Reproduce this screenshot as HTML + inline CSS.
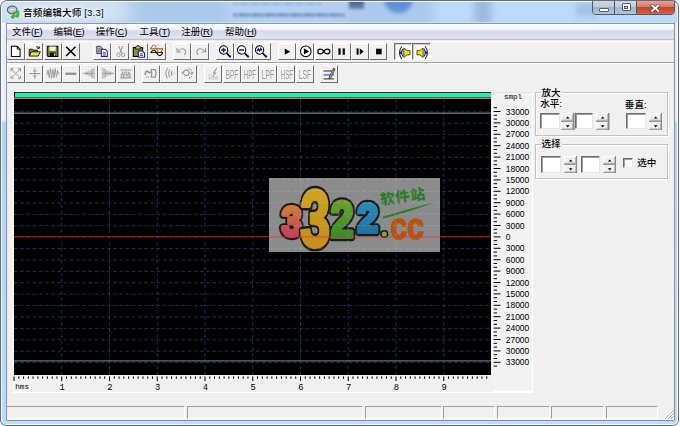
<!DOCTYPE html>
<html lang="zh-CN"><head><meta charset="utf-8"><title>音频编辑大师 [3.3]</title>
<style>
html,body{margin:0;padding:0;}
body{width:680px;height:426px;overflow:hidden;background:#fff;position:relative;
 font-family:"Liberation Sans","Noto Sans CJK SC",sans-serif;}
div,span,svg{position:absolute;box-sizing:border-box;}
#win{left:0;top:0;width:679px;height:426px;border-radius:7px 7px 6px 6px;background:linear-gradient(#b0cef0 0,#b0cef0 22px,#e6effa 23px,#e6effa 120px,#b2d3f8 123px,#bcdcfb 100%);overflow:hidden;}
#winbd{left:0;top:0;width:679px;height:426px;border-radius:7px 7px 6px 6px;border:1px solid #626a74;}
#winhi{left:1px;top:1px;width:677px;height:424px;border-radius:6px 6px 5px 5px;border:1px solid rgba(255,255,255,.85);}
#client{left:7px;top:23px;width:667px;height:397px;background:#f0f0f0;overflow:hidden;}
#cborder{left:6px;top:22px;width:669px;height:399px;border:1px solid #8391a5;border-top-color:#c6ddf6;border-radius:0 0 2px 2px;}
#title{font-weight:500;left:23px;top:5.8px;font-size:9.6px;letter-spacing:.15px;line-height:14px;color:#000;white-space:nowrap;
 text-shadow:0 0 3px #fff,0 0 5px #fff,0 0 7px #fff;}
#menubar{left:0;top:0;width:667px;height:19px;}
.mi{top:1.5px;font-size:9.5px;line-height:13px;color:#000;white-space:nowrap;}
.tb{width:18.2px;height:17.4px;background:#f0f0f0;border:1px solid;border-color:#fff #6d6d6d #6d6d6d #fff;}
.tb.dis svg{filter:drop-shadow(.8px .8px 0 #fff);}
.tb.dn{border-color:#6d6d6d #fff #fff #6d6d6d;background:#f7f7f7;box-shadow:inset 1px 1px 0 rgba(109,109,109,.3);}
.tb.dn svg{left:2.2px;top:1.9px;}
.tb svg{left:1.4px;top:1.2px;width:13.6px;height:12.75px;overflow:visible;}
.hl{left:0;width:667px;height:2px;border-top:1px solid #a0a0a0;border-bottom:1px solid #fff;}
.grp{border:1px solid #c2c2c2;border-radius:0;box-shadow:1px 1px 0 #fff, inset 1px 1px 0 #fff;}
.glab{font-weight:500;font-size:9.6px;line-height:11px;background:#f0f0f0;white-space:nowrap;color:#000;padding:0 1px;}
.lab{font-weight:500;font-size:9.6px;line-height:11px;white-space:nowrap;color:#000;}
.edit{background:#fff;border:1px solid;border-color:#6c6c6c #e6e6e6 #e6e6e6 #6c6c6c;box-shadow:inset 1px 1px 0 #9c9c9c;}
.spin{width:13.4px;}
.spin i{position:absolute;left:0;width:13.4px;height:8.6px;box-sizing:border-box;background:#f0f0f0;border:1px solid;border-color:#fff #686868 #686868 #fff;box-shadow:inset -1px -1px 0 rgba(104,104,104,.35);}
.spin i b{position:absolute;left:4.1px;top:2px;width:0;height:0;border:1.7px solid transparent;}
.sp{border:1px solid;border-color:#a0a0a0 #fff #fff #a0a0a0;height:13.4px;top:383px;}
</style></head>
<body>
<div id="win">
<div style="left:0;top:0;width:679px;height:22px;background:linear-gradient(to right,#b0ceec 0,#aacaeb 200px,#a9c8ea 218px,#b4d1f1 230px,#b2cff0 343px,#abcaec 352px,#abcaec 425px,#bcdaf9 442px,#bcdaf9 100%)"></div>
<div style="left:-10px;top:-6px;width:140px;height:34px;background:rgba(255,255,255,.45);filter:blur(9px);border-radius:12px"></div>
<div style="left:233px;top:13.4px;width:112px;height:3.2px;background:repeating-linear-gradient(to right,rgba(60,100,160,.5) 0,rgba(60,100,160,.3) 5px,rgba(60,100,160,.55) 9px,rgba(60,100,160,.35) 13px);filter:blur(1.1px)"></div>
<div style="left:233px;top:2.2px;width:88px;height:2.4px;background:repeating-linear-gradient(to right,rgba(60,100,160,.25) 0,rgba(60,100,160,.12) 6px,rgba(60,100,160,.28) 11px);filter:blur(1.1px)"></div>
<div style="left:348.5px;top:-2px;width:15.5px;height:11px;background:linear-gradient(rgba(35,50,90,.8),rgba(60,80,130,.55));filter:blur(1.7px)"></div>
<div style="left:384px;top:-16px;width:29px;height:29px;background:rgba(75,130,210,.8);filter:blur(2px);border-radius:50%"></div>
<div style="left:474px;top:-3px;width:17px;height:28px;background:rgba(90,120,170,.33);filter:blur(3.5px)"></div>
<div style="left:576px;top:4px;width:22px;height:12px;background:rgba(110,140,185,.35);filter:blur(3.5px)"></div>
<div id="winhi"></div>
<svg style="left:7px;top:5px;width:14px;height:14px" viewBox="0 0 14 14">
<ellipse cx="5.2" cy="4.9" rx="4.8" ry="3.7" fill="#cfd2d6" stroke="#5e6268" stroke-width="1.2"/>
<ellipse cx="5" cy="4.5" rx="2.4" ry="1.5" fill="#f8f8f8" stroke="#8a8e94" stroke-width=".6"/>
<path d="M6.2 7.2 L11.8 6 L11.8 10.8 A1.7 1.4 0 1 1 10.5 9.5 L10.5 7.9 L7.5 8.6 L7.5 11.9 A1.7 1.4 0 1 1 6.2 10.6 Z" fill="#3ec23a" stroke="#22961f" stroke-width=".5"/>
</svg>
<div id="title">音频编辑大师 [3.3]</div>
<div style="left:592px;top:-1px;width:83px;height:16px;border:1px solid #4c5966;border-radius:0 0 4px 4px;overflow:hidden;background:#c5d6ea">
<div style="left:0;top:0;width:22px;height:15px;background:linear-gradient(#d3dce8 0%,#bcc9da 45%,#a2b3c9 50%,#b7c6d9 100%);border-right:1px solid #4c5966"></div>
<div style="left:22px;top:0;width:22px;height:15px;background:linear-gradient(#d3dce8 0%,#bcc9da 45%,#a2b3c9 50%,#b7c6d9 100%);border-right:1px solid #4c5966"></div>
<div style="left:44px;top:0;width:38px;height:15px;background:linear-gradient(#e9a99b 0%,#d9796a 45%,#c6432c 50%,#cf5a40 85%,#d98268 100%)"></div>
<div style="left:6px;top:8px;width:10px;height:3.6px;background:#fff;border:1px solid #55606e;border-radius:1px"></div>
<div style="left:28.5px;top:3.4px;width:9.6px;height:8px;border:1px solid #55606e;border-radius:1px;background:#fff"></div>
<div style="left:31.2px;top:6px;width:4.2px;height:2.8px;border:1px solid #55606e;background:#c3d3e6"></div>
<svg style="left:57px;top:3.7px;width:10.4px;height:8.4px" viewBox="0 0 11 9"><path d="M2.2 1.6 L8.8 7.4 M8.8 1.6 L2.2 7.4" stroke="#4a4656" stroke-width="3.4" stroke-linecap="square"/><path d="M2.2 1.6 L8.8 7.4 M8.8 1.6 L2.2 7.4" stroke="#fff" stroke-width="1.9" stroke-linecap="square"/></svg>
</div>
<div id="cborder"></div>
<div id="client">
<div id="menubar">
<svg style="left:0;top:0;width:667px;height:19px" viewBox="0 0 667 19" preserveAspectRatio="none">
<defs><linearGradient id="mg" x1="0" y1="0" x2="0" y2="1"><stop offset="0" stop-color="#ffffff"/><stop offset=".08" stop-color="#ffffff"/><stop offset=".3" stop-color="#f6f7fc"/><stop offset=".455" stop-color="#eceef9"/><stop offset=".48" stop-color="#d4d9ec"/><stop offset=".9" stop-color="#dde1f1"/><stop offset=".95" stop-color="#e7e9fb"/><stop offset="1" stop-color="#d0d2e0"/></linearGradient></defs>
<rect x="0" y="0" width="667" height="15.8" fill="url(#mg)"/>
<rect x="0" y="0" width="667" height="0.8" fill="#74808f"/>
<rect x="0" y="15.8" width="667" height="0.5" fill="#c6c8d2"/>
<rect x="0" y="16.2" width="667" height="1.3" fill="#bcbcbc"/>
<rect x="0" y="17.5" width="667" height="1.2" fill="#ffffff"/>
</svg>
<span class="mi" style="left:5px">文件<span style="position:static;letter-spacing:-.3px">(<u>F</u>)</span></span>
<span class="mi" style="left:46.5px">编辑<span style="position:static;letter-spacing:-.3px">(<u>E</u>)</span></span>
<span class="mi" style="left:88.7px">操作<span style="position:static;letter-spacing:-.3px">(<u>C</u>)</span></span>
<span class="mi" style="left:132.5px">工具<span style="position:static;letter-spacing:-.3px">(<u>T</u>)</span></span>
<span class="mi" style="left:174.2px">注册<span style="position:static;letter-spacing:-.3px">(<u>R</u>)</span></span>
<span class="mi" style="left:218px">帮助<span style="position:static;letter-spacing:-.3px">(<u>H</u>)</span></span>
</div>
<div class="tb" style="left:0.00px;top:19.80px"><svg viewBox="0 0 16 15"><path d="M2.8 1.5 H9.6 L13 4.9 V13.6 H2.8 Z" fill="#fff" stroke="#000" stroke-width="1.2"/><path d="M9.6 1.5 V4.9 H13" fill="none" stroke="#000" stroke-width="1"/></svg></div>
<div class="tb" style="left:18.25px;top:19.80px"><svg viewBox="0 0 16 15"><path d="M1.5 13 V5 H5 L6 6 H11 V8" fill="#8a8a1e" stroke="#000" stroke-width="1"/><path d="M1.5 13 L4 8 H14.5 L12 13 Z" fill="#e6e65a" stroke="#000" stroke-width="1"/><path d="M9.5 2.5 Q12 1 13 3.5 M13.3 1.6 V4 H11" fill="none" stroke="#000" stroke-width="1"/></svg></div>
<div class="tb" style="left:36.50px;top:19.80px"><svg viewBox="0 0 16 15"><path d="M1.5 1.5 H14 V13.5 H2.5 L1.5 12.5 Z" fill="#7f7f16" stroke="#000" stroke-width="1.2"/><rect x="4" y="1.8" width="7.5" height="5" fill="#f3f3f3"/><rect x="4.5" y="9" width="7" height="4.5" fill="#111"/><rect x="9.3" y="10" width="1.6" height="2.6" fill="#e8e8e8"/></svg></div>
<div class="tb" style="left:54.75px;top:19.80px"><svg viewBox="0 0 16 15"><path d="M2.5 2 L13.5 13 M13.5 2 L2.5 13" stroke="#000" stroke-width="1.9" fill="none"/></svg></div>
<div class="tb" style="left:86.00px;top:19.80px"><svg viewBox="0 0 16 15"><path d="M2 1.5 H6.5 L8.5 3.5 V10 H2 Z" fill="#b5b5b5" stroke="#3a3a3a" stroke-width="1"/><path d="M7.5 5 H12 L14.5 7.5 V13.5 H7.5 Z" fill="#fff" stroke="#1a1aa8" stroke-width="1.2"/><path d="M9.2 8.5 H12.5 M9.2 10.3 H12.8 M9.2 12 H12.8" stroke="#1a1aa8" stroke-width=".9"/><path d="M3.5 4 H6 M3.5 6 H6.5 M3.5 8 H6" stroke="#555" stroke-width=".8"/></svg></div>
<div class="tb dis" style="left:104.25px;top:19.80px"><svg viewBox="0 0 16 15"><path d="M5.5 1 L9.2 9.5 M10.5 1 L6.8 9.5" stroke="#969696" stroke-width="1.2" fill="none"/><circle cx="5.3" cy="11.6" r="2" fill="none" stroke="#969696" stroke-width="1.1"/><circle cx="10.7" cy="11.6" r="2" fill="none" stroke="#969696" stroke-width="1.1"/></svg></div>
<div class="tb" style="left:122.50px;top:19.80px"><svg viewBox="0 0 16 15"><rect x="1.5" y="3" width="11" height="10.5" fill="#8f8f2a" stroke="#000" stroke-width="1.2"/><path d="M4.2 4.6 V2.2 H6 V0.8 H8.2 V2.2 H10 V4.6 Z" fill="#d8d86a" stroke="#000" stroke-width=".9"/><path d="M7.5 7 H12.2 L14.8 9.5 V14.5 H7.5 Z" fill="#fff" stroke="#1a1aa8" stroke-width="1.3"/><path d="M9.3 10.4 H12.8 M9.3 12.4 H12.8" stroke="#1a1aa8" stroke-width="1"/></svg></div>
<div class="tb" style="left:140.75px;top:19.80px"><svg viewBox="0 0 16 15"><path d="M0.5 4.4 H15.5" stroke="#9a9a1a" stroke-width="1.5"/><path d="M1 4.4 Q4.5 -4.4 8 4.4 T15 4.4" fill="none" stroke="#e41a1a" stroke-width="1.3" stroke-dasharray="1.7 1"/><path d="M0.5 8.8 H15.5" stroke="#222" stroke-width="1.1"/><path d="M1 9 Q4.5 3 8 9.4 T15 9" fill="none" stroke="#000" stroke-width="1.3"/></svg></div>
<div class="tb dis" style="left:166.00px;top:19.80px"><svg viewBox="0 0 16 15"><path d="M3 7.5 Q7.5 2.5 11.5 5.5 Q14 8 11 11.5" fill="none" stroke="#969696" stroke-width="1.3"/><path d="M2.4 3.6 V8.2 H7" fill="none" stroke="#969696" stroke-width="1.3"/></svg></div>
<div class="tb dis" style="left:184.25px;top:19.80px"><svg viewBox="0 0 16 15"><path d="M13 7.5 Q8.5 2.5 4.5 5.5 Q2 8 5 11.5" fill="none" stroke="#969696" stroke-width="1.3"/><path d="M13.6 3.6 V8.2 H9" fill="none" stroke="#969696" stroke-width="1.3"/></svg></div>
<div class="tb" style="left:209.20px;top:19.80px"><svg viewBox="0 0 16 15"><circle cx="5.4" cy="5.9" r="4.9" fill="#fff" stroke="#000" stroke-width="1.2"/><path d="M8.8 9.4 L13.6 14.2" stroke="#000" stroke-width="2"/><path d="M12.2 12.6 L13.8 14.2" stroke="#1a1aa8" stroke-width="2.2"/><path d="M2.6 5.9 H8.2 M5.4 3.1 V8.7" stroke="#1414b4" stroke-width="1.8"/></svg></div>
<div class="tb" style="left:227.45px;top:19.80px"><svg viewBox="0 0 16 15"><circle cx="5.4" cy="5.9" r="4.9" fill="#fff" stroke="#000" stroke-width="1.2"/><path d="M8.8 9.4 L13.6 14.2" stroke="#000" stroke-width="2"/><path d="M12.2 12.6 L13.8 14.2" stroke="#1a1aa8" stroke-width="2.2"/><path d="M2.6 5.9 H8.2" stroke="#1414b4" stroke-width="1.8"/></svg></div>
<div class="tb" style="left:245.70px;top:19.80px"><svg viewBox="0 0 16 15"><circle cx="5.4" cy="5.9" r="4.9" fill="#fff" stroke="#000" stroke-width="1.2"/><path d="M8.8 9.4 L13.6 14.2" stroke="#000" stroke-width="2"/><path d="M12.2 12.6 L13.8 14.2" stroke="#1a1aa8" stroke-width="2.2"/><path d="M2.4 7.2 L4 4.4 L5.4 7 L6.8 4.2 L8.4 6.4" fill="none" stroke="#1414b4" stroke-width="1.5"/><path d="M3 5.8 H8" stroke="#1414b4" stroke-width="1.2"/></svg></div>
<div class="tb" style="left:271.00px;top:19.80px"><svg viewBox="0 0 16 15"><path d="M5.6 4.2 L12 7.8 L5.6 11.4 Z" fill="#000"/></svg></div>
<div class="tb" style="left:289.25px;top:19.80px"><svg viewBox="0 0 16 15"><circle cx="8" cy="7.5" r="6.2" fill="#fff" stroke="#000" stroke-width="1.2"/><path d="M5.8 3.8 L11.8 7.5 L5.8 11.2 Z" fill="#000"/></svg></div>
<div class="tb" style="left:307.50px;top:19.80px"><svg viewBox="0 0 16 15"><path d="M8 7.7 C6 3.9 1 4.2 1 7.7 C1 11.2 6 11.5 8 7.7 C10 3.9 15 4.2 15 7.7 C15 11.2 10 11.5 8 7.7 Z" fill="none" stroke="#000" stroke-width="1.45"/></svg></div>
<div class="tb" style="left:325.75px;top:19.80px"><svg viewBox="0 0 16 15"><rect x="4" y="4" width="2.6" height="7.5" fill="#000"/><rect x="9" y="4" width="2.6" height="7.5" fill="#000"/></svg></div>
<div class="tb" style="left:344.00px;top:19.80px"><svg viewBox="0 0 16 15"><rect x="4.2" y="4" width="2.4" height="7.5" fill="#000"/><path d="M8 4 L12.6 7.75 L8 11.5 Z" fill="#000"/></svg></div>
<div class="tb" style="left:362.25px;top:19.80px"><svg viewBox="0 0 16 15"><rect x="4.8" y="4.4" width="6.6" height="6.6" fill="#000"/></svg></div>
<div class="tb dn" style="left:387.20px;top:19.80px"><svg viewBox="0 0 16 15"><path d="M15.2 5.4 H11.8 L8 2.4 V13.4 L11.8 10.4 H15.2 Z" fill="#e8e81c" stroke="#3a3a00" stroke-width="1"/><path d="M5.6 0.6 Q0.4 7.9 5.6 15.2" fill="none" stroke="#26264a" stroke-width="1.3"/><path d="M7 3.4 Q4 7.9 7 12.4" fill="none" stroke="#26264a" stroke-width="1.2"/><rect x="3.2" y="6.6" width="2.8" height="2.6" fill="#1a1aa8"/></svg></div>
<div class="tb dn" style="left:405.40px;top:19.80px"><svg viewBox="0 0 16 15"><path d="M1.2 5.4 H4.6 L8.4 2.4 V13.4 L4.6 10.4 H1.2 Z" fill="#e8e81c" stroke="#3a3a00" stroke-width="1"/><path d="M10.8 0.6 Q16 7.9 10.8 15.2" fill="none" stroke="#26264a" stroke-width="1.3"/><path d="M9.4 3.4 Q12.4 7.9 9.4 12.4" fill="none" stroke="#26264a" stroke-width="1.2"/><rect x="10.4" y="6.6" width="2.8" height="2.6" fill="#1a1aa8"/></svg></div>
<div class="hl" style="top:39.2px"></div>
<div class="tb dis" style="left:0.00px;top:42.20px"><svg viewBox="0 0 16 15"><path d="M3.4 3.2 L12.6 12.2 M12.6 3.2 L3.4 12.2" stroke="#969696" stroke-width="1.1"/><path d="M2.4 5.2 V2.2 H5.4 M10.6 2.2 H13.6 V5.2 M13.6 10.2 V13.2 H10.6 M5.4 13.2 H2.4 V10.2" fill="none" stroke="#969696" stroke-width="1.2"/></svg></div>
<div class="tb dis" style="left:18.25px;top:42.20px"><svg viewBox="0 0 16 15"><path d="M1.5 7.7 H14.5" stroke="#969696" stroke-width="1.3"/><path d="M8 1 V14.4 M5.8 4.8 H10.2 M5.8 10.6 H10.2" stroke="#969696" stroke-width="1.1"/></svg></div>
<div class="tb dis" style="left:36.50px;top:42.20px"><svg viewBox="0 0 16 15"><path d="M1 9.5 L2.4 3.5 L3.8 12.5 L5.2 1.8 L6.6 13.4 L8 3 L9.4 12.6 L10.8 1.8 L12.2 12 L13.6 4 L15 9" fill="none" stroke="#969696" stroke-width="1.1"/></svg></div>
<div class="tb dis" style="left:54.75px;top:42.20px"><svg viewBox="0 0 16 15"><path d="M1.5 7.3 H14.5 M1.5 8.7 H14.5" stroke="#969696" stroke-width="1.4"/></svg></div>
<div class="tb dis" style="left:73.00px;top:42.20px"><svg viewBox="0 0 16 15"><path d="M2.2 6.9 V8.1 M3.7 6.3 V8.7 M5.2 5.1 V9.9 M6.7 5.7 V9.3 M8.2 3.9 V11.1 M9.7 4.7 V10.3 M11.2 2.5 V12.5 M12.7 1.7 V13.3 M14.2 0.9 V14.1 " stroke="#969696" stroke-width=".9"/><path d="M1 7.5 H15" stroke="#969696" stroke-width=".9"/></svg></div>
<div class="tb dis" style="left:91.25px;top:42.20px"><svg viewBox="0 0 16 15"><path d="M2.2 0.9 V14.1 M3.7 1.7 V13.3 M5.2 2.5 V12.5 M6.7 4.7 V10.3 M8.2 3.9 V11.1 M9.7 5.7 V9.3 M11.2 5.1 V9.9 M12.7 6.3 V8.7 M14.2 6.9 V8.1 " stroke="#969696" stroke-width=".9"/><path d="M1 7.5 H15" stroke="#969696" stroke-width=".9"/></svg></div>
<div class="tb dis" style="left:109.50px;top:42.20px"><svg viewBox="0 0 16 15"><path d="M1.5 3.6 H14.5 M1.5 12.8 H14.5" stroke="#969696" stroke-width="1.2"/><path d="M2.5 11 L4.2 5.5 L5.9 11 Z M10.1 11 L11.8 5.5 L13.5 11 Z M6.8 11 V5.8 H9.2 V11" fill="none" stroke="#969696" stroke-width="1"/><path d="M1.5 9 H14.5" stroke="#969696" stroke-width=".8"/></svg></div>
<div class="tb dis" style="left:134.90px;top:42.20px"><svg viewBox="0 0 16 15"><path d="M1.5 9.5 Q1.5 3.5 4.5 5.5 T8.5 5.5" fill="none" stroke="#969696" stroke-width="2"/><path d="M8.5 3 H13.4 Q14.8 7.5 13.4 12 H8.5 Q10 7.5 8.5 3Z" fill="none" stroke="#969696" stroke-width="1.5"/><path d="M2 12 H6.5" stroke="#969696" stroke-width="1.4" stroke-dasharray="1.4 .8"/></svg></div>
<div class="tb dis" style="left:153.15px;top:42.20px"><svg viewBox="0 0 16 15"><path d="M5.4 1.4 Q1.2 7.5 5.4 13.6 M8.2 3 Q5 7.5 8.2 12 M10.8 4.8 Q8.8 7.5 10.8 10.2" fill="none" stroke="#969696" stroke-width="1.3"/><path d="M12.6 7.5 H13.6" stroke="#969696" stroke-width="1.4"/></svg></div>
<div class="tb dis" style="left:171.40px;top:42.20px"><svg viewBox="0 0 16 15"><path d="M1.5 6.8 L5.2 3.6 H8 L9.8 6.8 L8 10 H5.2 Z" fill="none" stroke="#969696" stroke-width="1.4"/><path d="M10.6 2.4 L13 4.4 M11.6 7 H14.4 M11 12.6 L13.2 10.4 M9.6 1 V3 M10 11.6 V13.8 M12 5.4 V9.4 M13.6 5.8 V8.6" stroke="#969696" stroke-width="1.1"/></svg></div>
<div class="tb dis" style="left:197.30px;top:42.20px"><svg viewBox="0 0 16 15"><path d="M11.5 1.5 L7.5 7 H10 L6.5 12" fill="none" stroke="#969696" stroke-width="1.3"/><path d="M2 9.5 H5.5 M2 12 H5.5 M2 14 H13 M8.5 12 H13" stroke="#969696" stroke-width="1" stroke-dasharray="1.5 .8"/></svg></div>
<div class="tb dis" style="left:215.55px;top:42.20px"><svg viewBox="0 0 16 15"><text x="8.1" y="13.9" text-anchor="middle" font-family="Liberation Sans Narrow,Liberation Sans,sans-serif" font-size="16" textLength="14.5" lengthAdjust="spacingAndGlyphs" fill="#969696">BPF</text></svg></div>
<div class="tb dis" style="left:233.80px;top:42.20px"><svg viewBox="0 0 16 15"><text x="8.1" y="13.9" text-anchor="middle" font-family="Liberation Sans Narrow,Liberation Sans,sans-serif" font-size="16" textLength="14.5" lengthAdjust="spacingAndGlyphs" fill="#969696">HPF</text></svg></div>
<div class="tb dis" style="left:252.05px;top:42.20px"><svg viewBox="0 0 16 15"><text x="8.1" y="13.9" text-anchor="middle" font-family="Liberation Sans Narrow,Liberation Sans,sans-serif" font-size="16" textLength="14.5" lengthAdjust="spacingAndGlyphs" fill="#969696">LPF</text></svg></div>
<div class="tb dis" style="left:270.30px;top:42.20px"><svg viewBox="0 0 16 15"><text x="8.1" y="13.9" text-anchor="middle" font-family="Liberation Sans Narrow,Liberation Sans,sans-serif" font-size="16" textLength="14.5" lengthAdjust="spacingAndGlyphs" fill="#969696">HSF</text></svg></div>
<div class="tb dis" style="left:288.55px;top:42.20px"><svg viewBox="0 0 16 15"><text x="8.1" y="13.9" text-anchor="middle" font-family="Liberation Sans Narrow,Liberation Sans,sans-serif" font-size="16" textLength="14.5" lengthAdjust="spacingAndGlyphs" fill="#969696">LSF</text></svg></div>
<div class="tb" style="left:313.30px;top:42.20px"><svg viewBox="0 0 16 15"><path d="M0.6 4.7 H10.6 M0.6 14 H13" stroke="#000" stroke-width="1"/><path d="M0.6 9.4 H13" stroke="#2020ff" stroke-width="1.2"/><path d="M12.4 1.4 L14.2 2.6 L9 13 L7.2 14 L7.4 11.8 Z" fill="#e8d820" stroke="#222" stroke-width=".9"/><path d="M12.4 1.4 L14.2 2.6 L13.2 4.6 L11.4 3.4 Z" fill="#e02020"/><path d="M10.4 5.4 L12.2 6.6 L10.8 9.4 L9 8.2Z" fill="#20a0e0"/></svg></div>
<div style="left:6px;top:68px;width:1px;height:301px;background:#fafafa"></div>
<div style="left:6px;top:368.7px;width:520px;height:1px;background:#fff"></div>
<div style="left:484.8px;top:68px;width:1px;height:285px;background:#fff"></div>
<div style="left:485.8px;top:68.8px;width:40px;height:300px;border:1px solid #fff;border-top-color:#e2e2e2;border-left:0;background:#f2f2f2"></div>
<svg style="left:7.0px;top:68.6px;width:477.4px;height:283.0px" viewBox="0 0 477.4 283.0">
<rect width="477.4" height="283.0" fill="#000"/>
<rect x="1" y="0.80" width="476.4" height="4.3" fill="#21f0ae"/>
<rect x="0" y="5.40" width="477.4" height="1.6" fill="#9c8888"/>
<path d="M0 19.75 H477.4 M0 31.15 H477.4 M0 42.55 H477.4 M0 53.95 H477.4 M0 65.35 H477.4 M0 76.75 H477.4 M0 88.15 H477.4 M0 99.55 H477.4 M0 110.95 H477.4 M0 122.35 H477.4 M0 133.75 H477.4 M0 145.15 H477.4 M0 156.55 H477.4 M0 167.95 H477.4 M0 179.35 H477.4 M0 190.75 H477.4 M0 202.15 H477.4 M0 213.55 H477.4 M0 224.95 H477.4 M0 236.35 H477.4 M0 247.75 H477.4 M0 259.15 H477.4 M0 270.55 H477.4 " stroke="#11375d" stroke-width="1" stroke-dasharray="3.6 2.6" fill="none"/>
<path d="M47.75 7 V283.0 M95.50 7 V283.0 M143.25 7 V283.0 M191.00 7 V283.0 M238.75 7 V283.0 M286.50 7 V283.0 M334.25 7 V283.0 M382.00 7 V283.0 M429.75 7 V283.0 " stroke="#11375d" stroke-width="1" stroke-dasharray="3.6 2.6" fill="none"/>
<rect x="0" y="20.60" width="477.4" height="1.2" fill="#78808e"/>
<rect x="0" y="268.30" width="477.4" height="1.2" fill="#6a7280"/>
<rect x="0" y="144.15" width="477.4" height="1" fill="#b81a1a"/>
</svg>
<div style="left:262px;top:154.8px;width:171px;height:73.8px;background:#8b8b8b"></div>
<svg style="left:262px;top:154.8px;width:171px;height:73.8px;overflow:visible" viewBox="0 0 171 73.8">
<defs>
<linearGradient id="g1" x1="0" y1="0" x2="0" y2="1"><stop offset="0" stop-color="#d08c34"/><stop offset=".55" stop-color="#c85a4c"/><stop offset="1" stop-color="#c02a6a"/></linearGradient>
<linearGradient id="g2" x1="0" y1="0" x2="0" y2="1"><stop offset="0" stop-color="#d0aa26"/><stop offset="1" stop-color="#c48618"/></linearGradient>
<linearGradient id="g3" x1="0" y1="0" x2="0" y2="1"><stop offset="0" stop-color="#78a428"/><stop offset="1" stop-color="#28842c"/></linearGradient>
<linearGradient id="g4" x1="0" y1="0" x2="0" y2="1"><stop offset="0" stop-color="#3290bc"/><stop offset="1" stop-color="#1a6c9c"/></linearGradient>
</defs>
<g font-family="Liberation Sans,sans-serif" font-weight="bold" stroke-linejoin="round">
<text x="12.5" y="58.5" font-size="43" textLength="20" lengthAdjust="spacingAndGlyphs" stroke="#1c1a1a" stroke-width="8.3" fill="#1c1a1a">3</text><text x="12.5" y="58.5" font-size="43" textLength="20" lengthAdjust="spacingAndGlyphs" stroke="url(#g1)" stroke-width="3.9" fill="url(#g1)">3</text>
<text x="61.5" y="59" font-size="50" textLength="23" lengthAdjust="spacingAndGlyphs" stroke="#1c1a1a" stroke-width="8.3" fill="#1c1a1a">2</text><text x="61.5" y="59" font-size="50" textLength="23" lengthAdjust="spacingAndGlyphs" stroke="url(#g3)" stroke-width="3.9" fill="url(#g3)">2</text>
<text x="88.5" y="54.5" font-size="41" textLength="20.5" lengthAdjust="spacingAndGlyphs" stroke="#1c1a1a" stroke-width="8.3" fill="#1c1a1a">2</text><text x="88.5" y="54.5" font-size="41" textLength="20.5" lengthAdjust="spacingAndGlyphs" stroke="url(#g4)" stroke-width="3.9" fill="url(#g4)">2</text>
<text x="31.5" y="67.5" font-size="79" textLength="29.5" lengthAdjust="spacingAndGlyphs" stroke="#1c1a1a" stroke-width="9" fill="#1c1a1a">3</text><text x="31.5" y="67.5" font-size="79" textLength="29.5" lengthAdjust="spacingAndGlyphs" stroke="url(#g2)" stroke-width="4" fill="url(#g2)">3</text>
</g>
<circle cx="115.3" cy="56" r="3.3" fill="#86ac24" stroke="#1c1a1a" stroke-width="1.6"/>
<text x="121.6" y="61.4" font-family="Liberation Sans,sans-serif" font-weight="bold" font-size="37" fill="#b8540f" stroke="#b8540f" stroke-width="1.7" textLength="33.5" lengthAdjust="spacingAndGlyphs">cc</text>
<text x="112" y="27" font-family="Noto Sans CJK SC,sans-serif" font-weight="900" font-size="14.5" fill="#2c7c28" transform="rotate(-8 112 27)" textLength="45">软件站</text>
<path d="M114 38.5 Q140 31 166 24 Q141 34 114 40.5 Z" fill="#2c7c28"/>
</svg>
<svg style="left:262px;top:154.8px;width:171px;height:73.8px" viewBox="0 0 171 73.8">
<path d="M0 1.90 H171 M0 13.30 H171 M0 24.70 H171 M0 36.10 H171 M0 47.50 H171 M0 70.30 H171 M31.50 0 V73.8 M79.25 0 V73.8 M127.00 0 V73.8 " stroke="#a8c4e0" stroke-opacity=".3" stroke-width="1" stroke-dasharray="3.6 2.6" fill="none"/>
<rect x="0" y="58.35" width="171" height="1.1" fill="#d84040" fill-opacity=".7"/>
</svg>
<svg style="left:6px;top:352.4px;width:479px;height:16px;overflow:visible" viewBox="0 0 479 16">
<path d="M1.00 1.4 V6 M5.78 1.4 V3.8 M10.55 1.4 V3.8 M15.33 1.4 V3.8 M20.10 1.4 V3.8 M24.88 1.4 V3.8 M29.65 1.4 V3.8 M34.43 1.4 V3.8 M39.20 1.4 V3.8 M43.98 1.4 V3.8 M48.75 1.4 V6 M53.53 1.4 V3.8 M58.30 1.4 V3.8 M63.08 1.4 V3.8 M67.85 1.4 V3.8 M72.62 1.4 V3.8 M77.40 1.4 V3.8 M82.18 1.4 V3.8 M86.95 1.4 V3.8 M91.73 1.4 V3.8 M96.50 1.4 V6 M101.28 1.4 V3.8 M106.05 1.4 V3.8 M110.83 1.4 V3.8 M115.60 1.4 V3.8 M120.38 1.4 V3.8 M125.15 1.4 V3.8 M129.93 1.4 V3.8 M134.70 1.4 V3.8 M139.48 1.4 V3.8 M144.25 1.4 V6 M149.03 1.4 V3.8 M153.80 1.4 V3.8 M158.58 1.4 V3.8 M163.35 1.4 V3.8 M168.12 1.4 V3.8 M172.90 1.4 V3.8 M177.68 1.4 V3.8 M182.45 1.4 V3.8 M187.23 1.4 V3.8 M192.00 1.4 V6 M196.78 1.4 V3.8 M201.55 1.4 V3.8 M206.33 1.4 V3.8 M211.10 1.4 V3.8 M215.88 1.4 V3.8 M220.65 1.4 V3.8 M225.43 1.4 V3.8 M230.20 1.4 V3.8 M234.98 1.4 V3.8 M239.75 1.4 V6 M244.53 1.4 V3.8 M249.30 1.4 V3.8 M254.08 1.4 V3.8 M258.85 1.4 V3.8 M263.62 1.4 V3.8 M268.40 1.4 V3.8 M273.18 1.4 V3.8 M277.95 1.4 V3.8 M282.73 1.4 V3.8 M287.50 1.4 V6 M292.28 1.4 V3.8 M297.05 1.4 V3.8 M301.83 1.4 V3.8 M306.60 1.4 V3.8 M311.38 1.4 V3.8 M316.15 1.4 V3.8 M320.93 1.4 V3.8 M325.70 1.4 V3.8 M330.48 1.4 V3.8 M335.25 1.4 V6 M340.03 1.4 V3.8 M344.80 1.4 V3.8 M349.58 1.4 V3.8 M354.35 1.4 V3.8 M359.12 1.4 V3.8 M363.90 1.4 V3.8 M368.68 1.4 V3.8 M373.45 1.4 V3.8 M378.23 1.4 V3.8 M383.00 1.4 V6 M387.78 1.4 V3.8 M392.55 1.4 V3.8 M397.33 1.4 V3.8 M402.10 1.4 V3.8 M406.88 1.4 V3.8 M411.65 1.4 V3.8 M416.43 1.4 V3.8 M421.20 1.4 V3.8 M425.98 1.4 V3.8 M430.75 1.4 V6 M435.53 1.4 V3.8 M440.30 1.4 V3.8 M445.08 1.4 V3.8 M449.85 1.4 V3.8 M454.63 1.4 V3.8 M459.40 1.4 V3.8 M464.18 1.4 V3.8 M468.95 1.4 V3.8 M473.73 1.4 V3.8 " stroke="#000" stroke-width="1" fill="none"/>
<g font-family="Liberation Mono,monospace" font-size="7.7" fill="#000">
<text x="2.2" y="14.4">hms</text>
<text x="46.5" y="14.6" font-size="8.8">1</text>
<text x="94.2" y="14.6" font-size="8.8">2</text>
<text x="141.9" y="14.6" font-size="8.8">3</text>
<text x="189.7" y="14.6" font-size="8.8">4</text>
<text x="237.4" y="14.6" font-size="8.8">5</text>
<text x="285.2" y="14.6" font-size="8.8">6</text>
<text x="332.9" y="14.6" font-size="8.8">7</text>
<text x="380.7" y="14.6" font-size="8.8">8</text>
<text x="428.4" y="14.6" font-size="8.8">9</text>
</g></svg>
<svg style="left:486px;top:68px;width:40px;height:300px;overflow:visible" viewBox="0 0 40 300">
<path d="M0.6 16.70 H4 M0.6 20.50 H7.5 M0.6 24.30 H4 M0.6 28.10 H4 M0.6 31.90 H7.5 M0.6 35.70 H4 M0.6 39.50 H4 M0.6 43.30 H7.5 M0.6 47.10 H4 M0.6 50.90 H4 M0.6 54.70 H7.5 M0.6 58.50 H4 M0.6 62.30 H4 M0.6 66.10 H7.5 M0.6 69.90 H4 M0.6 73.70 H4 M0.6 77.50 H7.5 M0.6 81.30 H4 M0.6 85.10 H4 M0.6 88.90 H7.5 M0.6 92.70 H4 M0.6 96.50 H4 M0.6 100.30 H7.5 M0.6 104.10 H4 M0.6 107.90 H4 M0.6 111.70 H7.5 M0.6 115.50 H4 M0.6 119.30 H4 M0.6 123.10 H7.5 M0.6 126.90 H4 M0.6 130.70 H4 M0.6 134.50 H7.5 M0.6 138.30 H4 M0.6 142.10 H4 M0.6 145.90 H7.5 M0.6 149.70 H4 M0.6 153.50 H4 M0.6 157.30 H7.5 M0.6 161.10 H4 M0.6 164.90 H4 M0.6 168.70 H7.5 M0.6 172.50 H4 M0.6 176.30 H4 M0.6 180.10 H7.5 M0.6 183.90 H4 M0.6 187.70 H4 M0.6 191.50 H7.5 M0.6 195.30 H4 M0.6 199.10 H4 M0.6 202.90 H7.5 M0.6 206.70 H4 M0.6 210.50 H4 M0.6 214.30 H7.5 M0.6 218.10 H4 M0.6 221.90 H4 M0.6 225.70 H7.5 M0.6 229.50 H4 M0.6 233.30 H4 M0.6 237.10 H7.5 M0.6 240.90 H4 M0.6 244.70 H4 M0.6 248.50 H7.5 M0.6 252.30 H4 M0.6 256.10 H4 M0.6 259.90 H7.5 M0.6 263.70 H4 M0.6 267.50 H4 M0.6 271.30 H7.5 M0.6 275.10 H4 " stroke="#000" stroke-width="1" fill="none"/>
<text x="11" y="7.6" font-family="Liberation Mono,monospace" font-size="7.7" fill="#000" textLength="18">smpl</text>
<g font-family="Liberation Sans,sans-serif" font-size="8.5" fill="#000">
<text x="12.7" y="23.55">33000</text>
<text x="12.7" y="34.95">30000</text>
<text x="12.7" y="46.35">27000</text>
<text x="12.7" y="57.75">24000</text>
<text x="12.7" y="69.15">21000</text>
<text x="12.7" y="80.55">18000</text>
<text x="12.7" y="91.95">15000</text>
<text x="12.7" y="103.35">12000</text>
<text x="12.7" y="114.75">9000</text>
<text x="12.7" y="126.15">6000</text>
<text x="12.7" y="137.55">3000</text>
<text x="12.7" y="148.95">0</text>
<text x="12.7" y="160.35">3000</text>
<text x="12.7" y="171.75">6000</text>
<text x="12.7" y="183.15">9000</text>
<text x="12.7" y="194.55">12000</text>
<text x="12.7" y="205.95">15000</text>
<text x="12.7" y="217.35">18000</text>
<text x="12.7" y="228.75">21000</text>
<text x="12.7" y="240.15">24000</text>
<text x="12.7" y="251.55">27000</text>
<text x="12.7" y="262.95">30000</text>
<text x="12.7" y="274.35">33000</text>
</g></svg>
<div class="grp" style="left:528.2px;top:69.4px;width:133.2px;height:43.6px"></div>
<span class="glab" style="left:533.5px;top:63.8px">放大</span>
<span class="lab" style="left:533.2px;top:75.2px">水平:</span>
<span class="lab" style="left:617.8px;top:75.6px">垂直:</span>
<div class="edit" style="left:533.0px;top:89.6px;width:19.6px;height:16.6px"></div>
<svg style="left:554.2px;top:89.6px;width:13.4px;height:17.6px" viewBox="0 0 13.4 17.6"><rect x="0" y="0" width="13.4" height="8.8" fill="#696969"/><rect x="0" y="0" width="12.2" height="7.6" fill="#ffffff"/><rect x="1" y="1" width="11.2" height="6.6" fill="#a0a0a0"/><rect x="1" y="1" width="10.3" height="5.7" fill="#f0f0f0"/><path d="M4.9 5.5 L8.5 5.5 L6.7 3.4 Z" fill="#000"/><rect x="0" y="8.8" width="13.4" height="8.8" fill="#696969"/><rect x="0" y="8.8" width="12.2" height="7.6" fill="#ffffff"/><rect x="1" y="9.8" width="11.2" height="6.6" fill="#a0a0a0"/><rect x="1" y="9.8" width="10.3" height="5.7" fill="#f0f0f0"/><path d="M4.9 12.3 L8.5 12.3 L6.7 14.4 Z" fill="#000"/></svg>
<div class="edit" style="left:567.8px;top:89.6px;width:18.6px;height:16.6px"></div>
<svg style="left:589.2px;top:89.6px;width:13.4px;height:17.6px" viewBox="0 0 13.4 17.6"><rect x="0" y="0" width="13.4" height="8.8" fill="#696969"/><rect x="0" y="0" width="12.2" height="7.6" fill="#ffffff"/><rect x="1" y="1" width="11.2" height="6.6" fill="#a0a0a0"/><rect x="1" y="1" width="10.3" height="5.7" fill="#f0f0f0"/><path d="M4.9 5.5 L8.5 5.5 L6.7 3.4 Z" fill="#000"/><rect x="0" y="8.8" width="13.4" height="8.8" fill="#696969"/><rect x="0" y="8.8" width="12.2" height="7.6" fill="#ffffff"/><rect x="1" y="9.8" width="11.2" height="6.6" fill="#a0a0a0"/><rect x="1" y="9.8" width="10.3" height="5.7" fill="#f0f0f0"/><path d="M4.9 12.3 L8.5 12.3 L6.7 14.4 Z" fill="#000"/></svg>
<div class="edit" style="left:619.4px;top:89.6px;width:19.8px;height:16.6px"></div>
<svg style="left:642.0px;top:89.6px;width:13.4px;height:17.6px" viewBox="0 0 13.4 17.6"><rect x="0" y="0" width="13.4" height="8.8" fill="#696969"/><rect x="0" y="0" width="12.2" height="7.6" fill="#ffffff"/><rect x="1" y="1" width="11.2" height="6.6" fill="#a0a0a0"/><rect x="1" y="1" width="10.3" height="5.7" fill="#f0f0f0"/><path d="M4.9 5.5 L8.5 5.5 L6.7 3.4 Z" fill="#000"/><rect x="0" y="8.8" width="13.4" height="8.8" fill="#696969"/><rect x="0" y="8.8" width="12.2" height="7.6" fill="#ffffff"/><rect x="1" y="9.8" width="11.2" height="6.6" fill="#a0a0a0"/><rect x="1" y="9.8" width="10.3" height="5.7" fill="#f0f0f0"/><path d="M4.9 12.3 L8.5 12.3 L6.7 14.4 Z" fill="#000"/></svg>
<div class="grp" style="left:528.2px;top:120.8px;width:133.2px;height:35.6px"></div>
<span class="glab" style="left:533.5px;top:115.2px">选择</span>
<div class="edit" style="left:534.4px;top:132.6px;width:19.6px;height:17.0px"></div>
<svg style="left:557.0px;top:132.9px;width:13.4px;height:17.6px" viewBox="0 0 13.4 17.6"><rect x="0" y="0" width="13.4" height="8.8" fill="#696969"/><rect x="0" y="0" width="12.2" height="7.6" fill="#ffffff"/><rect x="1" y="1" width="11.2" height="6.6" fill="#a0a0a0"/><rect x="1" y="1" width="10.3" height="5.7" fill="#f0f0f0"/><path d="M4.9 5.5 L8.5 5.5 L6.7 3.4 Z" fill="#000"/><rect x="0" y="8.8" width="13.4" height="8.8" fill="#696969"/><rect x="0" y="8.8" width="12.2" height="7.6" fill="#ffffff"/><rect x="1" y="9.8" width="11.2" height="6.6" fill="#a0a0a0"/><rect x="1" y="9.8" width="10.3" height="5.7" fill="#f0f0f0"/><path d="M4.9 12.3 L8.5 12.3 L6.7 14.4 Z" fill="#000"/></svg>
<div class="edit" style="left:573.6px;top:132.6px;width:19.6px;height:17.0px"></div>
<svg style="left:595.8px;top:132.9px;width:13.4px;height:17.6px" viewBox="0 0 13.4 17.6"><rect x="0" y="0" width="13.4" height="8.8" fill="#696969"/><rect x="0" y="0" width="12.2" height="7.6" fill="#ffffff"/><rect x="1" y="1" width="11.2" height="6.6" fill="#a0a0a0"/><rect x="1" y="1" width="10.3" height="5.7" fill="#f0f0f0"/><path d="M4.9 5.5 L8.5 5.5 L6.7 3.4 Z" fill="#000"/><rect x="0" y="8.8" width="13.4" height="8.8" fill="#696969"/><rect x="0" y="8.8" width="12.2" height="7.6" fill="#ffffff"/><rect x="1" y="9.8" width="11.2" height="6.6" fill="#a0a0a0"/><rect x="1" y="9.8" width="10.3" height="5.7" fill="#f0f0f0"/><path d="M4.9 12.3 L8.5 12.3 L6.7 14.4 Z" fill="#000"/></svg>
<div class="edit" style="left:616px;top:135.2px;width:10.2px;height:10.2px"></div>
<span class="lab" style="left:630.2px;top:134.4px">选中</span>
<div class="sp" style="left:-1.0px;width:179.4px"></div>
<div class="sp" style="left:179.8px;width:176.4px"></div>
<div class="sp" style="left:357.6px;width:77.2px"></div>
<div class="sp" style="left:435.8px;width:52.4px"></div>
<div class="sp" style="left:489.8px;width:52.8px"></div>
<div class="sp" style="left:544.2px;width:53.0px"></div>
<div class="sp" style="left:598.6px;width:52.0px"></div>
<svg style="left:656.5px;top:386px;width:10px;height:10px" viewBox="0 0 10 10"><path d="M1 10 L10 1 M4 10 L10 4 M7 10 L10 7" stroke="#a9a9a9" stroke-width="1"/><path d="M2 10 L10 2 M5 10 L10 5 M8 10 L10 8" stroke="#fff" stroke-width="1"/></svg>
</div>
<div id="winbd"></div>
</div>
</body></html>
